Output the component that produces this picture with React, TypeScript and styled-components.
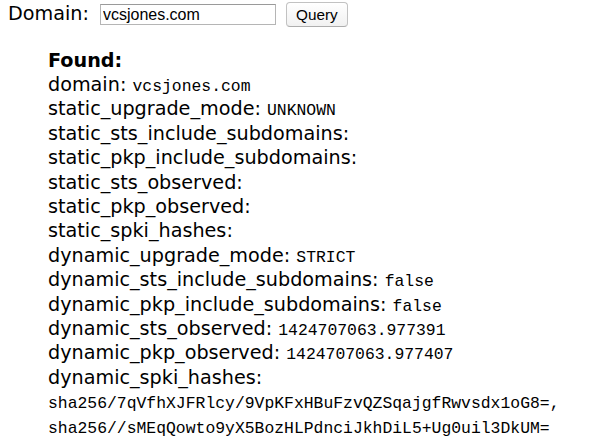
import React from "react";
import styled, { createGlobalStyle } from "styled-components";

const Global = createGlobalStyle`
  html, body { margin: 0; padding: 0; background: #fff; }
  body { font-family: "DejaVu Sans", "Noto Sans", sans-serif; color: #000; }
`;

const Page = styled.div`
  width: 600px;
  height: 442px;
  overflow: hidden;
  padding: 2px 0 0 8px;
  box-sizing: border-box;
  font-size: 19.2px;
  line-height: 24.4px;
`;

const QueryForm = styled.form`
  display: flex;
  align-items: center;
  height: 25px;
  margin: 0;
`;

const Label = styled.label`
  margin-right: 11px;
`;

const DomainInput = styled.input`
  box-sizing: border-box;
  width: 176px;
  height: 21px;
  border: 1px solid #b5b5b5;
  border-top-color: #9a9a9a;
  padding: 0 2px;
  font-family: "Liberation Sans", Arial, sans-serif;
  font-size: 16px;
  color: #000;
  outline: none;
  margin: 0 10px 0 0;
`;

const QueryButton = styled.button`
  box-sizing: border-box;
  width: 62px;
  height: 25px;
  border: 1px solid #c2c2c2;
  border-bottom-color: #adadad;
  border-radius: 4px;
  background: linear-gradient(#ffffff, #f1f1f1);
  font-family: "Liberation Sans", Arial, sans-serif;
  font-size: 15.3px;
  color: #000;
  padding: 0;
`;

const Results = styled.div`
  margin-top: 21.5px;
  padding-left: 40px;
`;

const Heading = styled.div`
  font-weight: bold;
`;

const Row = styled.div``;

const Value = styled.span`
  font-family: "Liberation Mono", "Courier New", monospace;
  font-size: 16.4px;
  line-height: 1;
`;

const Hash = styled.span`
  white-space: nowrap;
`;

const rows: [string, string][] = [
  ["domain", "vcsjones.com"],
  ["static_upgrade_mode", "UNKNOWN"],
  ["static_sts_include_subdomains", ""],
  ["static_pkp_include_subdomains", ""],
  ["static_sts_observed", ""],
  ["static_pkp_observed", ""],
  ["static_spki_hashes", ""],
  ["dynamic_upgrade_mode", "STRICT"],
  ["dynamic_sts_include_subdomains", "false"],
  ["dynamic_pkp_include_subdomains", "false"],
  ["dynamic_sts_observed", "1424707063.977391"],
  ["dynamic_pkp_observed", "1424707063.977407"],
];

const hashes = [
  "sha256/7qVfhXJFRlcy/9VpKFxHBuFzvQZSqajgfRwvsdx1oG8=",
  "sha256//sMEqQowto9yX5BozHLPdnciJkhDiL5+Ug0uil3DkUM=",
];

export default function App() {
  return (
    <Page>
      <Global />
      <QueryForm onSubmit={(e) => e.preventDefault()}>
        <Label>Domain:</Label>
        <DomainInput defaultValue="vcsjones.com" />
        <QueryButton type="submit">Query</QueryButton>
      </QueryForm>
      <Results>
        <Heading>Found:</Heading>
        {rows.map(([k, v]) => (
          <Row key={k}>
            {k}: {v && <Value>{v}</Value>}
          </Row>
        ))}
        <Row>
          dynamic_spki_hashes:{" "}
          <Value>
            {hashes.map((h, i) => (
              <React.Fragment key={h}>
                <Hash>{h + (i < hashes.length - 1 ? "," : "")}</Hash>
                {i < hashes.length - 1 ? " " : ""}
              </React.Fragment>
            ))}
          </Value>
        </Row>
      </Results>
    </Page>
  );
}
